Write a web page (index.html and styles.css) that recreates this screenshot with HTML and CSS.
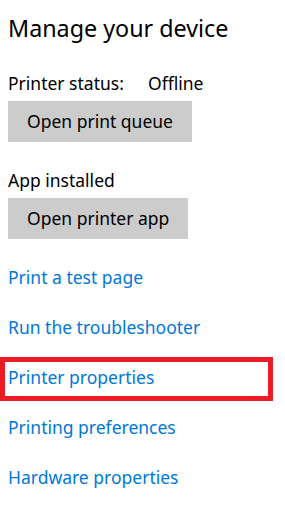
FILE: index.html
```html
<!DOCTYPE html>
<html lang="en">
<head>
    <meta charset="UTF-8">
    <meta name="viewport" content="width=device-width, initial-scale=1.0">
    <title>Manage your device</title>
    <link rel="stylesheet" href="styles.css">
</head>
<body>
    <div class="page">
        <h1 class="title">Manage your device</h1>

        <div class="row status-row">
            <span class="label">Printer status:</span>
            <span class="value">Offline</span>
        </div>
        <button class="action">Open print queue</button>

        <div class="row app-row">App installed</div>
        <button class="action">Open printer app</button>

        <ul class="links">
            <li><a href="#">Print a test page</a></li>
            <li><a href="#">Run the troubleshooter</a></li>
            <li class="highlight"><a href="#">Printer properties</a></li>
            <li><a href="#">Printing preferences</a></li>
            <li><a href="#">Hardware properties</a></li>
        </ul>
    </div>
</body>
</html>
```

FILE: styles.css
```css
body {
    margin: 0;
    background: #fff;
    font-family: "Noto Sans", "Open Sans", sans-serif;
    color: #000;
}
.page {
    padding: 13px 8px;
    display: flex;
    flex-direction: column;
    align-items: flex-start;
}
.title {
    margin: 0;
    font-size: 23.3px;
    font-weight: normal;
    line-height: 30px;
}
.row {
    font-size: 17.5px;
    line-height: 22px;
    margin-top: 29.2px;
}
.status-row {
    display: flex;
}
.status-row .label {
    width: 140px;
}
.action {
    margin-top: 6.8px;
    height: 41px;
    padding: 0 19px;
    border: none;
    background-color: #cccccc;
    color: #000;
    font-family: inherit;
    font-size: 17.5px;
    line-height: 41px;
    cursor: pointer;
}
.app-row {
    margin-top: 27.2px;
}
.links {
    list-style: none;
    margin: 13.2px 0 0;
    padding: 0;
    font-size: 17.5px;
}
.links li {
    height: 50px;
    line-height: 50px;
}
.links a {
    color: #0078d7;
    text-decoration: none;
}
.highlight {
    position: relative;
}
.highlight::after {
    content: "";
    position: absolute;
    left: -8px;
    top: 4.8px;
    width: 263px;
    height: 34px;
    border: 5px solid #ed1c24;
}
```
